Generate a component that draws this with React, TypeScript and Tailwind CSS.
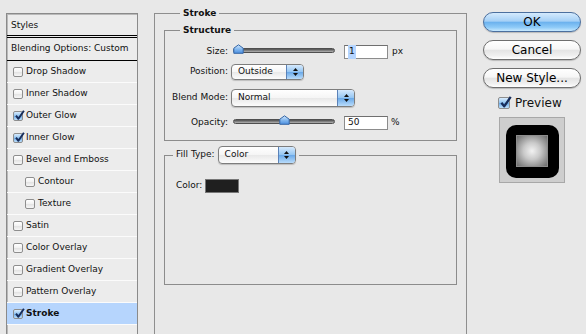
import type { ReactNode } from 'react';

const styleRows: { name: string; on?: boolean; indent?: boolean; active?: boolean }[] = [
  { name: 'Drop Shadow' },
  { name: 'Inner Shadow' },
  { name: 'Outer Glow', on: true },
  { name: 'Inner Glow', on: true },
  { name: 'Bevel and Emboss' },
  { name: 'Contour', indent: true },
  { name: 'Texture', indent: true },
  { name: 'Satin' },
  { name: 'Color Overlay' },
  { name: 'Gradient Overlay' },
  { name: 'Pattern Overlay' },
  { name: 'Stroke', on: true, active: true },
];

function CheckBox({ on, big }: { on?: boolean; big?: boolean }) {
  return (
    <span
      className={`relative shrink-0 rounded-[2px] border border-[#8e8e8e] ${big ? 'w-[12px] h-[12px]' : 'w-[10px] h-[10px]'} ${
        on
          ? 'bg-[linear-gradient(to_bottom,#d9ecfd,#8fc2ef_50%,#6aa9e6_51%,#bfe0fb)]'
          : 'bg-[linear-gradient(to_bottom,#ffffff,#f1f1f1_50%,#e2e2e2_51%,#f7f7f7)]'
      }`}
    >
      {on && (
        <svg className="absolute -top-[2px] left-0" width={big ? 13 : 11} height={big ? 13 : 11} viewBox="0 0 12 12">
          <path d="M2.2 6.2 L4.8 9.6 L10.8 0.8" fill="none" stroke="#172c5a" strokeWidth="2.1" strokeLinejoin="round" />
        </svg>
      )}
    </span>
  );
}

function Slider({ at }: { at: number }) {
  return (
    <div className="relative w-[102px] h-[14px] pt-[3px]">
      <div className="h-[5px] rounded-full border border-[#4f4f4f] bg-[linear-gradient(to_bottom,#4e4e4e,#8a8a8a_60%,#b4b4b4)]" />
      <svg className="absolute top-[-1px]" style={{ left: at }} width="11" height="10" viewBox="0 0 11 10">
        <defs>
          <linearGradient id={`thumb${at}`} x1="0" y1="0" x2="0" y2="1">
            <stop offset="0" stopColor="#d3e8fd" />
            <stop offset="0.55" stopColor="#7fb5ee" />
            <stop offset="1" stopColor="#4b8ee0" />
          </linearGradient>
        </defs>
        <path d="M5.5 0.8 L10.2 4.2 V9.3 H0.8 V4.2 Z" fill={`url(#thumb${at})`} stroke="#3566a6" strokeWidth="1" strokeLinejoin="round" />
      </svg>
    </div>
  );
}

function PopUp({ label, className }: { label: string; className: string }) {
  return (
    <div
      className={`flex shrink-0 rounded-[4px] border border-[#7d7d7d] bg-[linear-gradient(to_bottom,#ffffff,#f5f5f5_50%,#e8e8e8_51%,#fcfcfc)] shadow-[0_1px_1px_rgba(0,0,0,0.18)] ${className}`}
    >
      <span className="flex-1 flex items-center pl-[6px]">{label}</span>
      <span className="w-[17px] rounded-r-[3px] border-l border-[#5b82b8] bg-[linear-gradient(to_bottom,#d5e9fd,#93c5f2_50%,#69a8e8_51%,#b9dcfb)] flex flex-col items-center justify-center gap-[2px]">
        <svg width="5" height="3" viewBox="0 0 5 3">
          <path d="M2.5 0 L5 3 H0 Z" fill="#111" />
        </svg>
        <svg width="5" height="3" viewBox="0 0 5 3">
          <path d="M0 0 H5 L2.5 3 Z" fill="#111" />
        </svg>
      </span>
    </div>
  );
}

function Field({ children }: { children: ReactNode }) {
  return (
    <div className="shrink-0 w-[44px] h-[14px] border border-[#8c8c8c] border-t-[#6f6f6f] bg-white pl-[3px] flex items-center">
      {children}
    </div>
  );
}

function Row({ label, children, className }: { label: string; children: ReactNode; className: string }) {
  return (
    <div className={`flex items-center ${className}`}>
      <span className="w-[63px] shrink-0 text-right">{label}</span>
      {children}
    </div>
  );
}

function AquaButton({ children, primary }: { children: ReactNode; primary?: boolean }) {
  return (
    <button
      type="button"
      className={`h-[20px] w-[98px] rounded-full border text-[12px] leading-none text-black shadow-[0_1px_1px_rgba(0,0,0,0.2)] ${
        primary
          ? 'border-[#4b6f9e] bg-[linear-gradient(to_bottom,#d4eafd,#a5d0f6_45%,#6cb2ee_52%,#8fcbf8_80%,#c8e9fe)]'
          : 'border-[#6e6e6e] bg-[linear-gradient(to_bottom,#ffffff,#f6f6f6_45%,#e4e4e4_52%,#efefef_80%,#ffffff)]'
      }`}
    >
      {children}
    </button>
  );
}

export default function App() {
  return (
    <div className="w-[586px] h-[334px] overflow-hidden bg-[#e8e8e8] flex items-start font-['DejaVu_Sans',sans-serif] text-[9px] text-[#111]">
      {/* styles list */}
      <div className="ml-[6px] mt-[13px] w-[132px] h-[330px] shrink-0 border border-[#8a8a8a] bg-[#ececec] shadow-[inset_1px_1px_0_#b9b9b9]">
        <div className="h-[24px] pl-[4px] pt-[2px] flex items-center border-b-[3px] border-double border-black">Styles</div>
        <div className="h-[23px] pl-[4px] flex items-center border-b border-black">Blending Options: Custom</div>
        {styleRows.map((r) => (
          <div
            key={r.name}
            className={`h-[22px] flex items-center gap-[3px] border-b border-[#fbfbfb] ${r.indent ? 'pl-[18px]' : 'pl-[6px]'} ${
              r.active ? 'bg-[#b6d5fd] font-bold' : ''
            }`}
          >
            <CheckBox on={r.on} />
            <span>{r.name}</span>
          </div>
        ))}
      </div>

      {/* stroke panel */}
      <fieldset className="ml-[16px] mt-[8px] w-[313px] h-[340px] shrink-0 border border-b-0 border-[#8e8e8e] px-[9px]">
        <legend className="ml-[16px] px-[3px] font-bold leading-[11px]">Stroke</legend>

        <fieldset className="mt-[6px] border border-[#8c8c8c] pb-[10px]">
          <legend className="ml-[15px] px-[3px] font-bold leading-[11px]">Structure</legend>

          <Row label="Size:" className="mt-[9px] h-[14px]">
            <div className="ml-[5px]">
              <Slider at={0} />
            </div>
            <div className="ml-[9px]">
              <Field>
                <span className="bg-[#b5d5ff] px-[1px]">1</span>
              </Field>
            </div>
            <span className="ml-[4px]">px</span>
          </Row>

          <Row label="Position:" className="mt-[5px] h-[16px]">
            <PopUp label="Outside" className="ml-[3px] w-[73px] h-[16px]" />
          </Row>

          <Row label="Blend Mode:" className="mt-[9px] h-[18px]">
            <PopUp label="Normal" className="ml-[3px] w-[124px] h-[18px]" />
          </Row>

          <Row label="Opacity:" className="mt-[9px] h-[14px]">
            <div className="ml-[5px]">
              <Slider at={46} />
            </div>
            <div className="ml-[9px]">
              <Field>50</Field>
            </div>
            <span className="ml-[3px]">%</span>
          </Row>
        </fieldset>

        <fieldset className="mt-[5px] border border-[#8c8c8c]">
          <legend className="ml-[8px] px-[3px]">
            <div className="flex items-center gap-[3px]">
              <span>Fill Type:</span>
              <PopUp label="Color" className="w-[78px] h-[18px]" />
            </div>
          </legend>
          <div className="h-[120px] pl-[11px] pt-[15px]">
            <div className="flex items-center gap-[3px]">
              <span>Color:</span>
              <span className="w-[34px] h-[14px] border border-[#777] bg-[#1f1f1f]" />
            </div>
          </div>
        </fieldset>
      </fieldset>

      {/* buttons and preview */}
      <div className="ml-[16px] mt-[12px] w-[98px] shrink-0 flex flex-col">
        <div className="flex flex-col gap-[8px]">
          <AquaButton primary>OK</AquaButton>
          <AquaButton>Cancel</AquaButton>
          <AquaButton>New Style...</AquaButton>
        </div>
        <div className="mt-[9px] h-[12px] pl-[15px] flex items-center gap-[5px] text-[12px] leading-none">
          <CheckBox on big />
          <span>Preview</span>
        </div>
        <div className="mt-[8px] ml-[16px] w-[66px] h-[66px] border border-[#a8a8a8] bg-[#cecece] flex items-center justify-center">
          <div className="w-[53px] h-[53px] mt-[2px] rounded-[10px] bg-black flex items-center justify-center">
            <div className="w-[32px] h-[32px] border border-[#8d8d8d] bg-[radial-gradient(circle,#f2f2f2_0%,#c9c9c9_40%,#6b6b6b_100%)]" />
          </div>
        </div>
      </div>
    </div>
  );
}
